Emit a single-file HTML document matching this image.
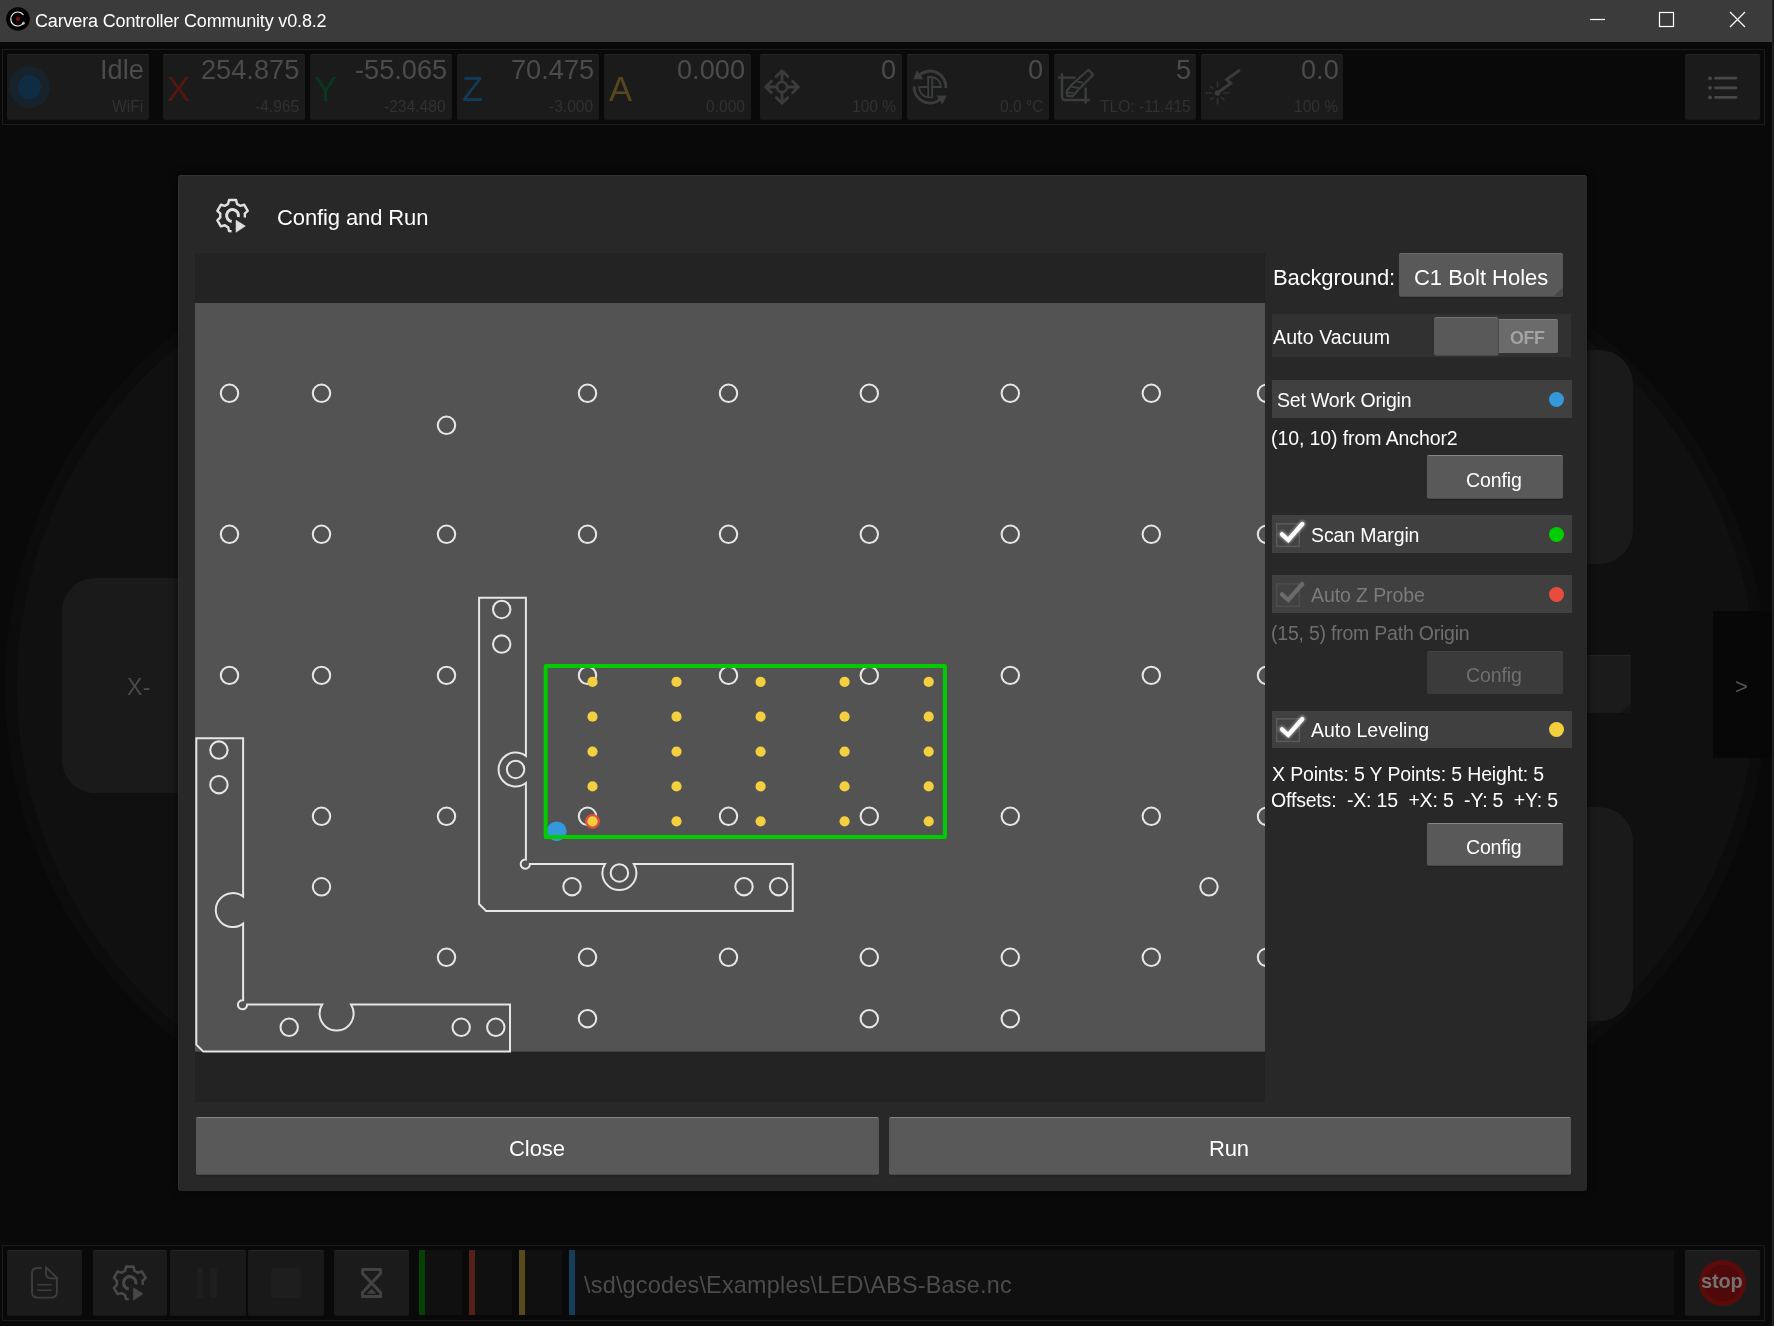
<!DOCTYPE html>
<html>
<head>
<meta charset="utf-8">
<title>Carvera Controller Community v0.8.2</title>
<style>
*{box-sizing:border-box;margin:0;padding:0}
html,body{width:1774px;height:1326px;overflow:hidden;background:#090909}
body{position:relative;font-family:"Liberation Sans",sans-serif;color:#fff}
.a{position:absolute}
.t{position:absolute;white-space:nowrap;line-height:1;will-change:transform}
svg{position:absolute;overflow:visible}
svg.board{overflow:hidden}
/* title bar */
#titlebar{left:0;top:0;width:1772px;height:42px;background:#3b3b3b}
#winedge{left:1772px;top:0;width:2px;height:1326px;background:linear-gradient(90deg,#262626 0 50%,#161616 50% 100%)}
/* top toolbar */
.outline{border:1px solid #1c1c1c}
.sb{position:absolute;top:54px;height:66px;background:#1b1b1b;border-radius:2px;border-top:1px solid #262626;border-bottom:1px solid #161616}
.big{color:#4b4b4b}
.small{color:#313131}

/* dialog */
#dlg{left:178.200px;top:175.200px;width:1408.800px;height:1015.800px;background:#282828;border-radius:3px;border-top:1.500px solid #343434;border-left:1px solid #2f2f2f;box-shadow:0 0 7px 1px rgba(0,0,0,.55)}
.row{position:absolute;left:1272px;width:300px;background:#404040}
.btn{position:absolute;background:#595959;border-radius:2px;border-top:1.300px solid #858585;border-bottom:1px solid #4a4a4a;box-shadow:0 1.500px 0 #222}
.dot{position:absolute;width:15.4px;height:15.4px;border-radius:50%}
/* bottom toolbar */
.bb{position:absolute;top:1250px;height:65.7px;background:#1b1b1b;border-radius:2px;border-top:1px solid #252525;border-bottom:1px solid #161616}
.bx{position:absolute;top:1250px;height:65px;background:#101010}
</style>
</head>
<body>
<!-- ===== background (dimmed main UI) ===== -->
<div class="a" style="left:5px;top:234px;width:904px;height:904px;border-radius:50%;background:#0c0c0c"></div>
<div class="a" style="left:17px;top:246px;width:880px;height:880px;border-radius:50%;background:#101010"></div>
<div class="a" style="left:864px;top:234px;width:904px;height:904px;border-radius:50%;background:#0c0c0c"></div>
<div class="a" style="left:876px;top:246px;width:880px;height:880px;border-radius:50%;background:#101010"></div>
<div class="a" style="left:62px;top:578px;width:214px;height:214.500px;border-radius:33px;background:#1a1a1a"></div>
<div class="t" style="top:676px;left:127.3px;letter-spacing:0.400px;font-size:23px;color:#4a4a4a">X-</div>
<div class="a" style="left:1419px;top:349.600px;width:213.600px;height:214px;border-radius:34px;background:#1a1a1a"></div>
<div class="a" style="left:1419px;top:806.500px;width:213.600px;height:214px;border-radius:34px;background:#1a1a1a"></div>
<div class="a" style="left:1500px;top:655px;width:131px;height:58.200px;background:#1b1b1b;border-top:1px solid #242424;overflow:hidden"><div class="a" style="right:0;bottom:0;width:0;height:0;border-left:10.500px solid transparent;border-bottom:10.500px solid #141414"></div></div>
<div class="a" style="left:1713px;top:610.800px;width:59px;height:147.600px;background:#070707"></div>
<div class="t" style="top:676px;left:1734.7px;font-size:22px;color:#565656">&gt;</div>

<!-- ===== title bar ===== -->
<div class="a" id="titlebar"></div>
<div class="a" id="winedge"></div>
<svg style="left:6px;top:7px" width="24" height="24" viewBox="0 0 24 24">
  <circle cx="12" cy="12" r="11.8" fill="#000"/>
  <path d="M17.2 7.6 A7 7 0 1 0 17.6 15.9" fill="none" stroke="#f0f0f0" stroke-width="1.150" stroke-linecap="round"/>
  <circle cx="17.5" cy="16.2" r="1.1" fill="none" stroke="#ddd" stroke-width="0.7"/>
  <circle cx="12" cy="12" r="2.200" fill="#7e0a0a"/>
</svg>
<div class="t" style="top:12px;left:34.8px;letter-spacing:-0.162px;font-size:18px;color:#fff">Carvera Controller Community v0.8.2</div>
<svg style="left:1580px;top:0" width="192" height="42" viewBox="1580 0 192 42">
  <path d="M1590 19.5H1605" stroke="#fff" stroke-width="1.2" fill="none"/>
  <rect x="1659.5" y="12.5" width="14" height="14" stroke="#fff" stroke-width="1.2" fill="none"/>
  <path d="M1730 12L1745 27M1745 12L1730 27" stroke="#fff" stroke-width="1.3" fill="none"/>
</svg>

<!-- ===== top status toolbar ===== -->
<div class="a outline" style="left:2px;top:49px;width:1762.700px;height:75.600px"></div>
<div class="sb" style="left:7px;width:142.4px"></div>
<div class="a" style="left:8.7px;top:66.2px;width:41.4px;height:41.4px;border-radius:50%;background:#17222a"></div>
<div class="a" style="left:17.5px;top:75px;width:23.8px;height:23.8px;border-radius:50%;background:#0e2d44"></div>
<div class="t big" style="top:56px;left:100.2px;font-size:27.2px">Idle</div>
<div class="t small" style="top:99px;left:112.2px;font-size:15.6px">WiFi</div>

<div class="sb" style="left:163px;width:142.2px"></div>
<div class="t axis" style="top:72px;left:167.3px;font-size:34.7px;color:#541810">X</div>
<div class="t big" style="top:56px;left:201.3px;font-size:27.2px">254.875</div>
<div class="t small" style="top:99px;left:255.3px;font-size:15.6px">-4.965</div>

<div class="sb" style="left:310.1px;width:142.3px"></div>
<div class="t axis" style="top:72px;left:314.3px;font-size:34.7px;color:#0a381c">Y</div>
<div class="t big" style="top:56px;left:355.1px;font-size:27.2px">-55.065</div>
<div class="t small" style="top:99px;left:384.1px;font-size:15.6px">-234.480</div>

<div class="sb" style="left:457.3px;width:142.1px"></div>
<div class="t axis" style="top:72px;left:462.2px;font-size:34.7px;color:#113c59">Z</div>
<div class="t big" style="top:56px;left:511.1px;font-size:27.2px">70.475</div>
<div class="t small" style="top:99px;left:549.1px;font-size:15.6px">-3.000</div>

<div class="sb" style="left:604.1px;width:146.8px"></div>
<div class="t axis" style="top:72px;left:609px;font-size:34.7px;color:#57471f">A</div>
<div class="t big" style="top:56px;left:677.1px;font-size:27.2px">0.000</div>
<div class="t small" style="top:99px;left:706.1px;font-size:15.6px">0.000</div>

<div class="sb" style="left:760.1px;width:141.8px"></div>
<svg style="left:764.2px;top:68.7px" width="36" height="36" viewBox="-18 -18 36 36" fill="none" stroke="#3b3b3b" stroke-width="2.9" stroke-linecap="round" stroke-linejoin="round">
  <circle cx="0" cy="0" r="5.05" stroke-width="2.7"/>
  <path d="M0 -6.4V-16M-5.8 -10.6L0 -16.3L5.8 -10.6"/>
  <path d="M0 6.4V16M-5.8 10.6L0 16.3L5.8 10.6"/>
  <path d="M-6.4 0H-16M-10.6 -5.8L-16.3 0L-10.600 5.800"/>
  <path d="M6.400 0H16M10.600 -5.800L16.300 0L10.600 5.800"/>
</svg>
<div class="t big" style="top:56px;left:881px;font-size:27.2px">0</div>
<div class="t small" style="top:99px;left:852px;font-size:15.6px">100 %</div>

<div class="sb" style="left:907.1px;width:142.2px"></div>
<svg style="left:911.5px;top:68.5px" width="36" height="36" viewBox="-18 -18 36 36" fill="none" stroke="#3b3d3d" stroke-width="2.9">
  <path d="M-10.8 -11.700A15.900 15.900 0 0 1 15.900 1.200"/>
  <path d="M10.800 11.700A15.900 15.900 0 0 1 -15.900 -0.600"/>
  <path d="M-13.300 -16.800L-16.600 -7.800H-6.400Z" fill="#3b3d3d" stroke="none"/>
  <path d="M12.400 17.400L16.700 8.500H6.200Z" fill="#3b3d3d" stroke="none"/>
  <g stroke-width="1.800">
  <path d="M-1.800 -10V10.400M2.200 -10V10.400"/>
  <path d="M-2.700 -10H0.600A10.300 10 0 0 1 10.900 0H2.200"/>
  <path d="M3.100 10.400H-0.600A10.300 10.400 0 0 1 -10.900 0H-1.800"/>
  </g>
</svg>
<div class="t big" style="top:56px;left:1028.3px;font-size:27.2px">0</div>
<div class="t small" style="top:99px;left:1000.3px;font-size:15.6px">0.0 °C</div>

<div class="sb" style="left:1054.1px;width:142.2px"></div>
<svg style="left:1056px;top:66px" width="42" height="42" viewBox="1056 66 42 42" fill="none" stroke="#3b3d3d" stroke-width="2.400" stroke-linejoin="round">
  <path d="M1058.100 77.600H1075.700M1062 73.300V96.800Q1062 100 1065.200 100H1089.800M1085.700 87.400V103.500"/>
  <path d="M1088.400 69.800L1093.200 74.800L1079.200 88.800L1072.600 96.200L1067.300 95.800L1066.700 91L1071.300 85.200Z" stroke-width="2.200"/>
  <path d="M1077.200 81.600L1083 82.600M1070.600 86.600L1078.600 88M1067.600 92.400L1073.400 93.200" stroke-width="1.800"/>
</svg>
<div class="t big" style="top:56px;left:1176px;font-size:27.2px">5</div>
<div class="t small" style="top:99px;left:1100px;font-size:15.6px">TLO: -11.415</div>

<div class="sb" style="left:1201.2px;width:142.1px"></div>
<svg style="left:1203px;top:66px" width="42" height="42" viewBox="1203 66 42 42" fill="none" stroke="#3b3b3b">
  <circle cx="1217.500" cy="93" r="2.800" fill="#3b3b3b" stroke="none"/>
  <path d="M1217.500 93L1230.750 83.200L1226.600 79.500L1239.900 69.950" stroke-width="2.900" stroke-linejoin="miter"/>
  <path d="M1217.500 81.400V87.600M1217.500 98.400V104.600M1205.700 93H1211.900M1223.100 93H1229.700M1210.200 86.100L1213.300 88.600M1210.200 99.800L1213.500 97.300M1221.200 97.100L1224.500 99.800" stroke="#303030" stroke-width="1.700"/>
</svg>
<div class="t big" style="top:56px;left:1300.5px;font-size:27.2px">0.0</div>
<div class="t small" style="top:99px;left:1293.5px;font-size:15.6px">100 %</div>

<div class="sb" style="left:1685.1px;width:74.6px"></div>
<svg style="left:1700px;top:70px" width="44" height="34" viewBox="1700 70 44 34">
  <g stroke="#484848" stroke-width="2.8" stroke-linecap="round">
    <path d="M1715.5 78.2H1736M1715.5 87.8H1736M1715.5 97.4H1736"/>
  </g>
  <circle cx="1710" cy="78.2" r="1.9" fill="#484848"/><circle cx="1710" cy="87.8" r="1.9" fill="#484848"/><circle cx="1710" cy="97.4" r="1.9" fill="#484848"/>
</svg>

<!-- ===== dialog ===== -->
<div class="a" id="dlg"></div>
<svg style="left:207px;top:190px" width="50" height="50" viewBox="207 190 50 50"><path d="M244.75,217.48 A12.35,12.35 0 0 0 244.75,213.62 L247.73,210.82 L244.24,204.77 L240.24,205.88 A12.35,12.35 0 0 0 237.08,204.06 L236.05,200.04 L229.05,200.04 L228.02,204.06 A12.35,12.35 0 0 0 224.86,205.88 L220.86,204.77 L217.37,210.82 L220.34,213.72 A12.35,12.35 0 0 0 220.34,217.38 L217.37,220.28 L220.86,226.33 L224.86,225.22 A12.35,12.35 0 0 0 228.02,227.04 L229.05,231.06 L231.59,231.32" fill="none" stroke="#e0e0e0" stroke-width="2.45" stroke-linejoin="round"/><path d="M238.32,216.99 A5.95,5.95 0 1 0 231.72,221.44" fill="none" stroke="#e0e0e0" stroke-width="3.0"/><path d="M236.05,220.25 L245.3,226.05 L236.05,232.2 Z" fill="#e0e0e0" stroke="#e0e0e0" stroke-width="0.6" stroke-linejoin="round"/></svg>
<div class="t f22" style="top:207px;left:277px;letter-spacing:-0.115px;font-size:22px">Config and Run</div>

<svg class="board" style="left:195px;top:253px" width="1069.5" height="848.7" viewBox="195 253 1069.5 848.7">
<rect x="195" y="253" width="1070" height="849" fill="#232323"/>
<rect x="195" y="303" width="1070" height="748.6" fill="#535353"/>
<circle cx="229.5" cy="393.3" r="8.7" fill="none" stroke="#e6e6e6" stroke-width="2.05"/>
<circle cx="321.5" cy="393.3" r="8.7" fill="none" stroke="#e6e6e6" stroke-width="2.05"/>
<circle cx="587.5" cy="393.3" r="8.7" fill="none" stroke="#e6e6e6" stroke-width="2.05"/>
<circle cx="728.5" cy="393.3" r="8.7" fill="none" stroke="#e6e6e6" stroke-width="2.05"/>
<circle cx="869.3" cy="393.3" r="8.7" fill="none" stroke="#e6e6e6" stroke-width="2.05"/>
<circle cx="1010.3" cy="393.3" r="8.7" fill="none" stroke="#e6e6e6" stroke-width="2.05"/>
<circle cx="1151.3" cy="393.3" r="8.7" fill="none" stroke="#e6e6e6" stroke-width="2.05"/>
<circle cx="1266.5" cy="393.3" r="8.7" fill="none" stroke="#e6e6e6" stroke-width="2.05"/>
<circle cx="229.5" cy="534.3" r="8.7" fill="none" stroke="#e6e6e6" stroke-width="2.05"/>
<circle cx="321.5" cy="534.3" r="8.7" fill="none" stroke="#e6e6e6" stroke-width="2.05"/>
<circle cx="446.5" cy="534.3" r="8.7" fill="none" stroke="#e6e6e6" stroke-width="2.05"/>
<circle cx="587.5" cy="534.3" r="8.7" fill="none" stroke="#e6e6e6" stroke-width="2.05"/>
<circle cx="728.5" cy="534.3" r="8.7" fill="none" stroke="#e6e6e6" stroke-width="2.05"/>
<circle cx="869.3" cy="534.3" r="8.7" fill="none" stroke="#e6e6e6" stroke-width="2.05"/>
<circle cx="1010.3" cy="534.3" r="8.7" fill="none" stroke="#e6e6e6" stroke-width="2.05"/>
<circle cx="1151.3" cy="534.3" r="8.7" fill="none" stroke="#e6e6e6" stroke-width="2.05"/>
<circle cx="1266.5" cy="534.3" r="8.7" fill="none" stroke="#e6e6e6" stroke-width="2.05"/>
<circle cx="229.5" cy="675.4" r="8.7" fill="none" stroke="#e6e6e6" stroke-width="2.05"/>
<circle cx="321.5" cy="675.4" r="8.7" fill="none" stroke="#e6e6e6" stroke-width="2.05"/>
<circle cx="446.5" cy="675.4" r="8.7" fill="none" stroke="#e6e6e6" stroke-width="2.05"/>
<circle cx="587.5" cy="675.4" r="8.7" fill="none" stroke="#e6e6e6" stroke-width="2.05"/>
<circle cx="728.5" cy="675.4" r="8.7" fill="none" stroke="#e6e6e6" stroke-width="2.05"/>
<circle cx="869.3" cy="675.4" r="8.7" fill="none" stroke="#e6e6e6" stroke-width="2.05"/>
<circle cx="1010.3" cy="675.4" r="8.7" fill="none" stroke="#e6e6e6" stroke-width="2.05"/>
<circle cx="1151.3" cy="675.4" r="8.7" fill="none" stroke="#e6e6e6" stroke-width="2.05"/>
<circle cx="1266.5" cy="675.4" r="8.7" fill="none" stroke="#e6e6e6" stroke-width="2.05"/>
<circle cx="446.5" cy="425.3" r="8.7" fill="none" stroke="#e6e6e6" stroke-width="2.05"/>
<circle cx="321.5" cy="816.3" r="8.7" fill="none" stroke="#e6e6e6" stroke-width="2.05"/>
<circle cx="446.5" cy="816.3" r="8.7" fill="none" stroke="#e6e6e6" stroke-width="2.05"/>
<circle cx="587.5" cy="816.3" r="8.7" fill="none" stroke="#e6e6e6" stroke-width="2.05"/>
<circle cx="728.5" cy="816.3" r="8.7" fill="none" stroke="#e6e6e6" stroke-width="2.05"/>
<circle cx="869.3" cy="816.3" r="8.7" fill="none" stroke="#e6e6e6" stroke-width="2.05"/>
<circle cx="1010.3" cy="816.3" r="8.7" fill="none" stroke="#e6e6e6" stroke-width="2.05"/>
<circle cx="1151.3" cy="816.3" r="8.7" fill="none" stroke="#e6e6e6" stroke-width="2.05"/>
<circle cx="1266.5" cy="816.3" r="8.7" fill="none" stroke="#e6e6e6" stroke-width="2.05"/>
<circle cx="446.5" cy="957.3" r="8.7" fill="none" stroke="#e6e6e6" stroke-width="2.05"/>
<circle cx="587.5" cy="957.3" r="8.7" fill="none" stroke="#e6e6e6" stroke-width="2.05"/>
<circle cx="728.5" cy="957.3" r="8.7" fill="none" stroke="#e6e6e6" stroke-width="2.05"/>
<circle cx="869.3" cy="957.3" r="8.7" fill="none" stroke="#e6e6e6" stroke-width="2.05"/>
<circle cx="1010.3" cy="957.3" r="8.7" fill="none" stroke="#e6e6e6" stroke-width="2.05"/>
<circle cx="1151.3" cy="957.3" r="8.7" fill="none" stroke="#e6e6e6" stroke-width="2.05"/>
<circle cx="1266.5" cy="957.3" r="8.7" fill="none" stroke="#e6e6e6" stroke-width="2.05"/>
<circle cx="321.5" cy="886.8" r="8.7" fill="none" stroke="#e6e6e6" stroke-width="2.05"/>
<circle cx="1209" cy="886.8" r="8.7" fill="none" stroke="#e6e6e6" stroke-width="2.05"/>
<circle cx="587.5" cy="1018.7" r="8.7" fill="none" stroke="#e6e6e6" stroke-width="2.05"/>
<circle cx="869.3" cy="1018.7" r="8.7" fill="none" stroke="#e6e6e6" stroke-width="2.05"/>
<circle cx="1010.3" cy="1018.7" r="8.7" fill="none" stroke="#e6e6e6" stroke-width="2.05"/>
<path d="M196.3,738.3 L243.1,738.3 L243.1,896.58 A17.0,17.0 0 1 0 243.1,923.62 L243.1,1000.2 A4.6,4.6 0 1 0 247.1,1004.6 L322.18,1004.6 A17.0,17.0 0 1 0 351.02,1004.6 L510,1004.6 L510,1051.6 L203.3,1051.6 L196.3,1044.6 Z" fill="none" stroke="#e6e6e6" stroke-width="2"/>
<circle cx="218.9" cy="750.1" r="8.7" fill="none" stroke="#e6e6e6" stroke-width="2.05"/>
<circle cx="218.9" cy="784.7" r="8.7" fill="none" stroke="#e6e6e6" stroke-width="2.05"/>
<circle cx="289.2" cy="1027.3" r="8.7" fill="none" stroke="#e6e6e6" stroke-width="2.05"/>
<circle cx="461.2" cy="1027.3" r="8.7" fill="none" stroke="#e6e6e6" stroke-width="2.05"/>
<circle cx="495.8" cy="1027.3" r="8.7" fill="none" stroke="#e6e6e6" stroke-width="2.05"/>
<path d="M479.1,597.7 L525.9,597.7 L525.9,755.98 A17.0,17.0 0 1 0 525.9,783.02 L525.9,859.6 A4.6,4.6 0 1 0 529.9,864 L604.98,864 A17.0,17.0 0 1 0 633.82,864 L792.8,864 L792.8,911 L486.1,911 L479.1,904 Z" fill="none" stroke="#e6e6e6" stroke-width="2"/>
<circle cx="501.7" cy="609.5" r="8.7" fill="none" stroke="#e6e6e6" stroke-width="2.05"/>
<circle cx="501.7" cy="644.1" r="8.7" fill="none" stroke="#e6e6e6" stroke-width="2.05"/>
<circle cx="572" cy="886.7" r="8.7" fill="none" stroke="#e6e6e6" stroke-width="2.05"/>
<circle cx="744" cy="886.7" r="8.7" fill="none" stroke="#e6e6e6" stroke-width="2.05"/>
<circle cx="778.6" cy="886.7" r="8.7" fill="none" stroke="#e6e6e6" stroke-width="2.05"/>
<circle cx="515.6" cy="769.5" r="8.7" fill="none" stroke="#e6e6e6" stroke-width="2.05"/>
<circle cx="619.4" cy="873" r="8.7" fill="none" stroke="#e6e6e6" stroke-width="2.05"/>
<circle cx="556.7" cy="831.3" r="9.9" fill="#3498db"/>
<rect x="545.7" y="666.1" width="399.2" height="170.8" fill="none" stroke="#00cc00" stroke-width="4" stroke-linejoin="round"/>
<circle cx="592.5" cy="821.4" r="7.4" fill="#e74c3c"/>
<circle cx="592.5" cy="681.9" r="5.1" fill="#f4d03f"/>
<circle cx="592.5" cy="716.7" r="5.1" fill="#f4d03f"/>
<circle cx="592.5" cy="751.6" r="5.1" fill="#f4d03f"/>
<circle cx="592.5" cy="786.4" r="5.1" fill="#f4d03f"/>
<circle cx="592.5" cy="821.3" r="5.1" fill="#f4d03f"/>
<circle cx="676.5" cy="681.9" r="5.1" fill="#f4d03f"/>
<circle cx="676.5" cy="716.7" r="5.1" fill="#f4d03f"/>
<circle cx="676.5" cy="751.6" r="5.1" fill="#f4d03f"/>
<circle cx="676.5" cy="786.4" r="5.1" fill="#f4d03f"/>
<circle cx="676.5" cy="821.3" r="5.1" fill="#f4d03f"/>
<circle cx="760.6" cy="681.9" r="5.1" fill="#f4d03f"/>
<circle cx="760.6" cy="716.7" r="5.1" fill="#f4d03f"/>
<circle cx="760.6" cy="751.6" r="5.1" fill="#f4d03f"/>
<circle cx="760.6" cy="786.4" r="5.1" fill="#f4d03f"/>
<circle cx="760.6" cy="821.3" r="5.1" fill="#f4d03f"/>
<circle cx="844.6" cy="681.9" r="5.1" fill="#f4d03f"/>
<circle cx="844.6" cy="716.7" r="5.1" fill="#f4d03f"/>
<circle cx="844.6" cy="751.6" r="5.1" fill="#f4d03f"/>
<circle cx="844.6" cy="786.4" r="5.1" fill="#f4d03f"/>
<circle cx="844.6" cy="821.3" r="5.1" fill="#f4d03f"/>
<circle cx="928.7" cy="681.9" r="5.1" fill="#f4d03f"/>
<circle cx="928.7" cy="716.7" r="5.1" fill="#f4d03f"/>
<circle cx="928.7" cy="751.6" r="5.1" fill="#f4d03f"/>
<circle cx="928.7" cy="786.4" r="5.1" fill="#f4d03f"/>
<circle cx="928.7" cy="821.3" r="5.1" fill="#f4d03f"/>
</svg>

<!-- right panel -->
<div class="t f22" style="top:267px;left:1272.9px;letter-spacing:-0.140px;font-size:22px">Background:</div>
<div class="btn" style="left:1399px;top:253px;width:164px;height:43.500px;overflow:hidden;border-top:1px solid #6a6a6a"><div class="a" style="right:0;bottom:-1px;width:0;height:0;border-left:10.5px solid transparent;border-bottom:10.5px solid #484848"></div></div>
<div class="t f22" style="top:267px;left:1413.6px;letter-spacing:-0.017px;font-size:22px">C1 Bolt Holes</div>

<div class="a" style="left:1272px;top:314px;width:299px;height:43.300px;background:#313131"></div>
<div class="t f18" style="top:328px;left:1273px;letter-spacing:0.130px;font-size:19.5px">Auto Vacuum</div>
<div class="a" style="left:1496px;top:319px;width:62px;height:34.3px;background:#6b6b6b;border-radius:2px;border-top:1px solid #7a7a7a"></div>
<div class="t" style="top:330px;left:1510px;letter-spacing:-0.400px;font-size:17.9px;font-weight:bold;color:#a3a3a3">OFF</div>
<div class="btn" style="left:1434.200px;top:317px;width:64px;height:38.800px;border-radius:3px;border-top:1px solid #727272;box-shadow:1px 0 0 #4c4c4c"></div>

<div class="row" style="top:380.2px;height:37.6px"></div>
<div class="t f18" style="top:391px;left:1276.7px;letter-spacing:-0.193px;font-size:19.5px">Set Work Origin</div>
<div class="dot" style="left:1549px;top:391.7px;background:#3498db"></div>
<div class="t f18" style="top:429px;left:1270.9px;letter-spacing:-0.095px;font-size:19.5px">(10, 10) from Anchor2</div>
<div class="btn" style="left:1427px;top:455.4px;width:136px;height:43.3px"></div>
<div class="t f18" style="top:471px;left:1465.5px;letter-spacing:-0.100px;font-size:19.5px">Config</div>

<div class="row" style="top:515.4px;height:37.4px"></div>
<div class="t f18" style="top:526px;left:1310.9px;letter-spacing:-0.100px;font-size:19.5px">Scan Margin</div>
<div class="dot" style="left:1549px;top:526.5px;background:#00cc00"></div>

<div class="row" style="top:575.4px;height:37.4px"></div>
<div class="t f18" style="top:586px;left:1311.2px;letter-spacing:-0.100px;font-size:19.5px;color:#7b7b7b">Auto Z Probe</div>
<div class="dot" style="left:1549px;top:586.7px;background:#e74c3c"></div>
<div class="t f18" style="top:624px;left:1270.9px;letter-spacing:-0.222px;font-size:19.5px;color:#6e6e6e">(15, 5) from Path Origin</div>
<div class="a" style="left:1427px;top:650.5px;width:136px;height:43.2px;background:#3b3b3b;border-radius:2px;border-top:1px solid #444"></div>
<div class="t f18" style="top:666px;left:1465.5px;letter-spacing:-0.100px;font-size:19.5px;color:#6f6f6f">Config</div>

<div class="row" style="top:710.5px;height:37.3px"></div>
<div class="t f18" style="top:721px;left:1311.2px;letter-spacing:-0.008px;font-size:19.5px">Auto Leveling</div>
<div class="dot" style="left:1549px;top:721.6px;background:#f4d03f"></div>
<div class="t f18" style="top:765px;left:1271.5px;letter-spacing:-0.147px;font-size:19.5px">X Points: 5 Y Points: 5 Height: 5</div>
<div class="t f18" style="top:791px;left:1270.5px;letter-spacing:-0.175px;font-size:19.5px;white-space:pre">Offsets:  -X: 15  +X: 5  -Y: 5  +Y: 5</div>
<div class="btn" style="left:1427px;top:823.4px;width:136px;height:43px"></div>
<div class="t f18" style="top:838px;left:1465.8px;letter-spacing:-0.160px;font-size:19.5px">Config</div>

<!-- checkboxes -->
<svg style="left:1272px;top:515px" width="40" height="38" viewBox="1272 515 40 38">
  <rect x="1276.7" y="523.8" width="22.6" height="22.6" fill="#424242" stroke="#5b5b5b" stroke-width="1.5"/>
  <path d="M1282 534.3L1288.3 540L1302.3 524" fill="none" stroke="#fff" stroke-opacity="0.35" stroke-width="7" stroke-linecap="round" stroke-linejoin="round" style="filter:blur(1.2px)"/>
  <path d="M1282 534.3L1288.3 540L1302.3 524" fill="none" stroke="#fff" stroke-width="4.3" stroke-linecap="round" stroke-linejoin="miter"/>
</svg>
<svg style="left:1272px;top:575px" width="40" height="38" viewBox="1272 515 40 38">
  <rect x="1276.7" y="523.8" width="22.6" height="22.6" fill="#414141" stroke="#4d4d4d" stroke-width="1.5"/>
  <path d="M1282 534.3L1288.3 540L1302.3 524" fill="none" stroke="#6a6a6a" stroke-width="4.3" stroke-linecap="round" stroke-linejoin="miter"/>
</svg>
<svg style="left:1272px;top:710px" width="40" height="38" viewBox="1272 515 40 38">
  <rect x="1276.7" y="523.8" width="22.6" height="22.6" fill="#424242" stroke="#5b5b5b" stroke-width="1.5"/>
  <path d="M1282 534.3L1288.3 540L1302.3 524" fill="none" stroke="#fff" stroke-opacity="0.35" stroke-width="7" stroke-linecap="round" stroke-linejoin="round" style="filter:blur(1.2px)"/>
  <path d="M1282 534.3L1288.3 540L1302.3 524" fill="none" stroke="#fff" stroke-width="4.3" stroke-linecap="round" stroke-linejoin="miter"/>
</svg>

<!-- bottom dialog buttons -->
<div class="btn" style="left:196.3px;top:1117.2px;width:682.3px;height:58px"></div>
<div class="t f22" style="top:1138px;left:508.8px;letter-spacing:-0.050px;font-size:22px">Close</div>
<div class="btn" style="left:888.5px;top:1117.2px;width:682px;height:58px"></div>
<div class="t f22" style="top:1138px;left:1209.4px;letter-spacing:-0.150px;font-size:22px">Run</div>

<!-- ===== bottom toolbar ===== -->
<div class="a outline" style="left:2px;top:1245px;width:1762.700px;height:76px"></div>
<div class="bb" style="left:7px;width:74.8px"></div>
<div class="bb" style="left:92.6px;width:74.4px"></div>
<div class="bb" style="left:170.4px;width:75.2px;background:#191919"></div>
<div class="bb" style="left:248.2px;width:75.5px;background:#191919"></div>
<div class="bb" style="left:334.1px;width:74.9px"></div>
<div class="bx" style="left:419.4px;width:42.6px"></div><div class="bx" style="left:419.4px;width:5.3px;background:#064206"></div>
<div class="bx" style="left:469.4px;width:42.6px"></div><div class="bx" style="left:469.4px;width:5.3px;background:#55201a"></div>
<div class="bx" style="left:519.4px;width:42.6px"></div><div class="bx" style="left:519.4px;width:5.3px;background:#574b1c"></div>
<div class="bx" style="left:569.4px;width:1105.1px"></div><div class="bx" style="left:569.4px;width:5.3px;background:#153f58"></div>
<div class="t" style="top:1274px;left:584.1px;letter-spacing:0.226px;font-size:23.4px;color:#4c4c4c">\sd\gcodes\Examples\LED\ABS-Base.nc</div>
<div class="bb" style="left:1685px;width:75px"></div>
<div class="a" style="left:1699.4px;top:1259.7px;width:46.4px;height:46.4px;border-radius:50%;background:#5c0b0b"></div>
<div class="a" style="left:1704.6px;top:1264.9px;width:36px;height:36px;border-radius:50%;background:#4f0909"></div>
<div class="t" style="top:1271px;left:1701.2px;letter-spacing:-0.167px;font-size:20px;font-weight:bold;color:#727272">stop</div>

<!-- bottom icons -->
<svg style="left:28px;top:1262px" width="34" height="40" viewBox="28 1262 34 40" fill="none" stroke="#3d3d3d" stroke-width="1.9" stroke-linejoin="round" stroke-linecap="butt">
  <path d="M41.7 1268H37.6Q32 1268 32 1273.600V1292Q32 1297.600 37.600 1297.600H51.300Q56.900 1297.600 56.900 1292V1278.500"/>
  <path d="M45.900 1267.300V1273Q45.900 1278.400 51.300 1278.400H57.500L45.900 1267.300Z"/>
  <path d="M37.200 1284.800H51.700M37.200 1290.200H51.700" stroke-width="1.6"/>
</svg>
<svg style="left:104px;top:1257px" width="52" height="52" viewBox="104 1257 52 52"><path d="M142.5,1284.87 A12.90575,12.90575 0 0 0 142.5,1280.83 L145.61,1277.91 L141.96,1271.58 L137.78,1272.75 A12.90575,12.90575 0 0 0 134.48,1270.84 L133.4,1266.64 L126.1,1266.64 L125.02,1270.84 A12.90575,12.90575 0 0 0 121.72,1272.75 L117.54,1271.58 L113.89,1277.91 L116.99,1280.94 A12.90575,12.90575 0 0 0 116.99,1284.76 L113.89,1287.79 L117.54,1294.12 L121.72,1292.95 A12.90575,12.90575 0 0 0 125.02,1294.86 L126.1,1299.06 L128.74,1299.33" fill="none" stroke="#484848" stroke-width="2.55" stroke-linejoin="round"/><path d="M135.78,1284.35 A6.21775,6.21775 0 1 0 128.88,1289.01" fill="none" stroke="#484848" stroke-width="3.1"/><path d="M133.41,1287.76 L143.07,1293.82 L133.41,1300.25 Z" fill="#484848" stroke="#484848" stroke-width="0.6" stroke-linejoin="round"/></svg>
<div class="a" style="left:196.500px;top:1268.400px;width:6.600px;height:29.200px;background:#1e1e1e;border-radius:1px"></div>
<div class="a" style="left:210px;top:1268.400px;width:6.600px;height:29.200px;background:#1e1e1e;border-radius:1px"></div>
<div class="a" style="left:271.200px;top:1268.400px;width:30px;height:29.600px;background:#1e1e1e;border-radius:3px"></div>
<svg style="left:358px;top:1265px" width="28" height="36" viewBox="358 1265 28 36" fill="none" stroke="#424242" stroke-width="3" stroke-linejoin="round">
  <path d="M362.500 1269.600H380.600V1273.400L362.500 1292.600V1296.400H380.600V1292.600L362.500 1273.400Z"/>
  <path d="M366.700 1293.700L371.550 1288.700L376.400 1293.700Z" fill="#424242" stroke="none"/>
</svg>
</body>
</html>
